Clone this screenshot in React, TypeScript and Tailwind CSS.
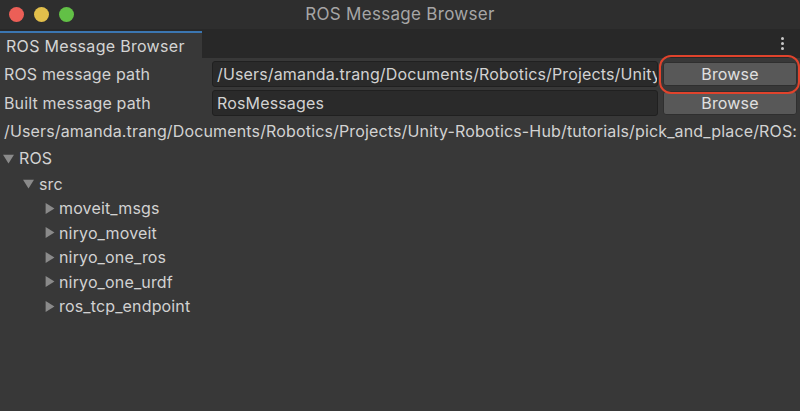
import React from "react";

const Tri = ({ open }: { open: boolean }) => (
  <svg width="11" height="11" viewBox="0 0 10 10" className="shrink-0">
    {open ? <polygon points="0,1.5 10,1.5 5,9.5" fill="#8a8a8a" /> : <polygon points="1.5,0 9.5,5 1.5,10" fill="#8a8a8a" />}
  </svg>
);

export default function App() {
  const font = { fontFamily: "Inter, 'Noto Sans', sans-serif" };
  const items = ["moveit_msgs", "niryo_moveit", "niryo_one_ros", "niryo_one_urdf", "ros_tcp_endpoint"];
  return (
    <div className="w-[800px] h-[411px] bg-[#383838] flex flex-col overflow-hidden text-[#d2d2d2] text-[16px] tracking-[0.15px]" style={font}>
      <div className="h-[29px] bg-[#2e2e2e] flex items-center relative shrink-0">
        <div className="flex gap-[10px] pl-[9px]">
          <span className="w-[15px] h-[15px] rounded-full bg-[#ec5f57]" />
          <span className="w-[15px] h-[15px] rounded-full bg-[#e2bf4b]" />
          <span className="w-[15px] h-[15px] rounded-full bg-[#62c046]" />
        </div>
        <div className="absolute inset-0 flex items-center justify-center text-[#a6a6a6] text-[17px] tracking-[0.3px]">ROS Message Browser</div>
      </div>
      <div className="h-[29px] bg-[#282828] flex items-end justify-between shrink-0">
        <div className="w-[202px] h-[27px] bg-[#383838] border-t-2 border-[#3b76b1] flex items-center pl-[6px] text-[16px] tracking-[0.3px] text-[#d4d4d4]">ROS Message Browser</div>
        <div className="flex flex-col gap-[2px] pr-[16px] pb-[8px]">
          <span className="w-[3px] h-[3px] rounded-full bg-[#c8c8c8]" />
          <span className="w-[3px] h-[3px] rounded-full bg-[#c8c8c8]" />
          <span className="w-[3px] h-[3px] rounded-full bg-[#c8c8c8]" />
        </div>
      </div>
      <div className="flex flex-col pt-[2px]">
        <div className="flex items-center h-[27px]">
          <div className="w-[212px] pl-[4px]">ROS message path</div>
          <div className="w-[446px] h-[26px] bg-[#2a2a2a] border border-[#202020] rounded-[3px] flex items-center pl-[4px] overflow-hidden whitespace-nowrap">
            /Users/amanda.trang/Documents/Robotics/Projects/Unity
          </div>
          <div className="relative ml-[5px]">
            <div className="w-[134px] h-[24px] bg-[#585858] border border-[#2f2f2f] rounded-[3px] flex items-center justify-center text-[#e0e0e0]">Browse</div>
            <div className="absolute left-[-4px] top-[-7px] w-[141px] h-[39px] rounded-[12px] border-[2.5px] border-[#e0432c]" />
          </div>
        </div>
        <div className="flex items-center h-[27px] mt-[2px]">
          <div className="w-[212px] pl-[4px]">Built message path</div>
          <div className="w-[446px] h-[26px] bg-[#2a2a2a] border border-[#202020] rounded-[3px] flex items-center pl-[4px]">RosMessages</div>
          <div className="ml-[5px] w-[134px] h-[24px] bg-[#585858] border border-[#2f2f2f] rounded-[3px] flex items-center justify-center text-[#e0e0e0]">Browse</div>
        </div>
        <div className="h-[30px] flex items-center pl-[4px] whitespace-nowrap overflow-hidden">
          /Users/amanda.trang/Documents/Robotics/Projects/Unity-Robotics-Hub/tutorials/pick_and_place/ROS:
        </div>
        <div className="flex flex-col -mt-[1px]">
          <div className="h-[26px] flex items-center gap-[5px] pl-[3px]"><Tri open />ROS</div>
          <div className="h-[25px] flex items-center gap-[5px] pl-[23px]"><Tri open />src</div>
          {items.map((t) => (
            <div key={t} className="h-[24.5px] flex items-center gap-[4px] pl-[44px]"><Tri open={false} />{t}</div>
          ))}
        </div>
      </div>
    </div>
  );
}
